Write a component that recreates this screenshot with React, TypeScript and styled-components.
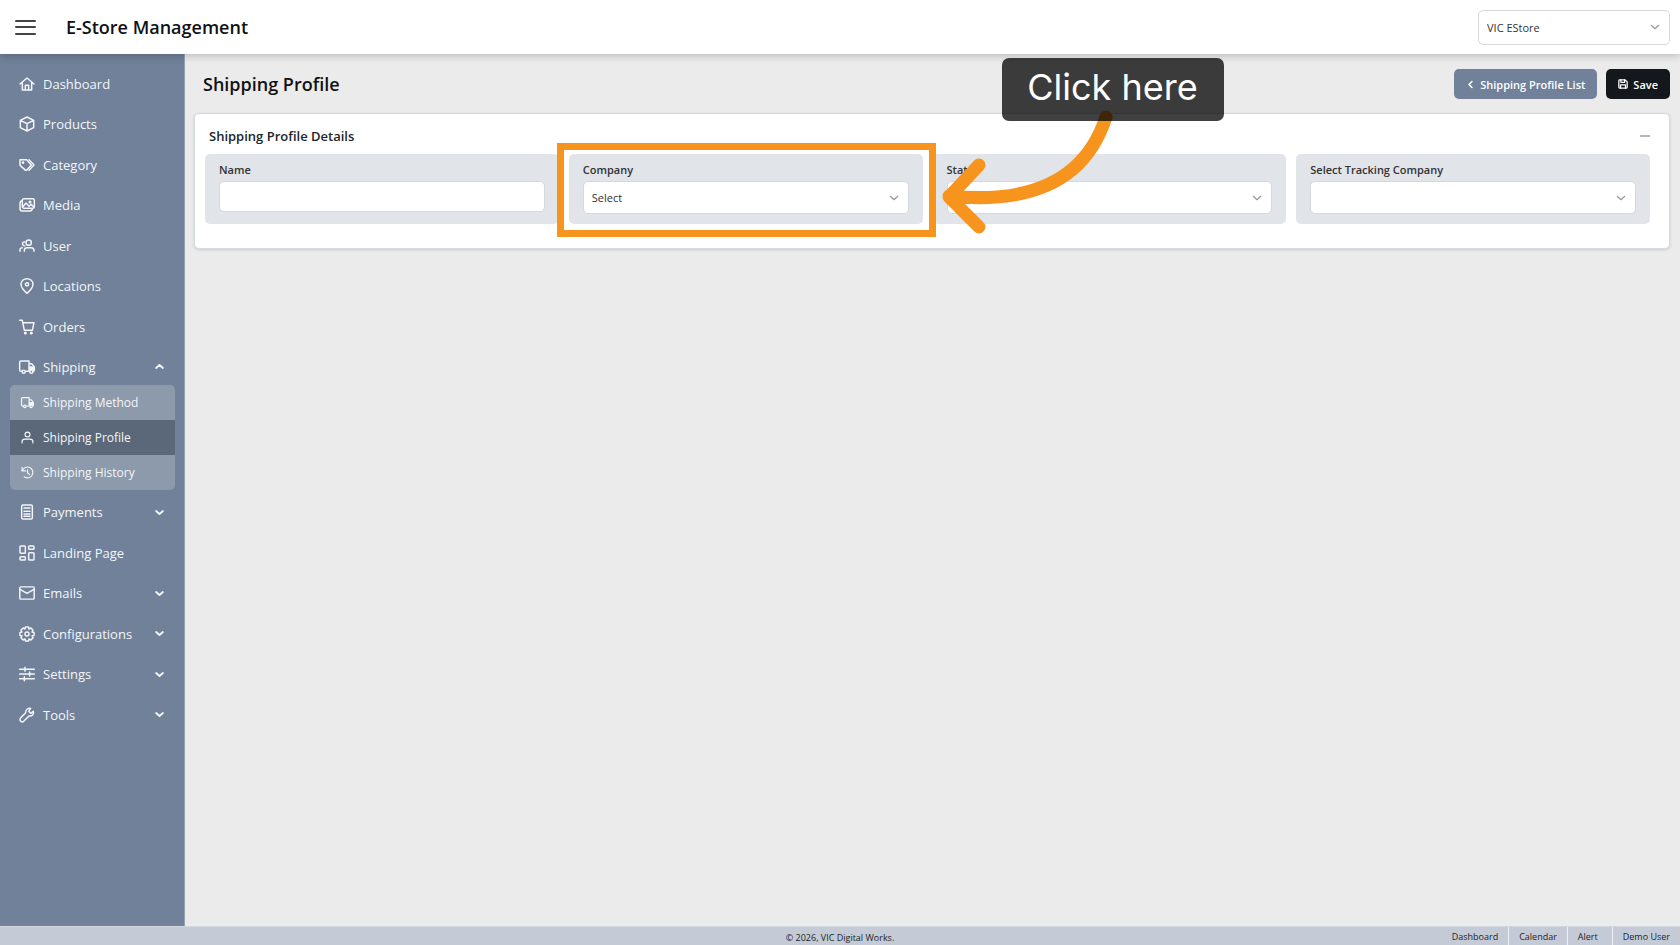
import React from "react";
import styled, { createGlobalStyle } from "styled-components";

const GlobalStyle = createGlobalStyle`
  *, *::before, *::after { box-sizing: border-box; }
  body {
    margin: 0;
    background: #ebebeb;
    color: #212529;
    font-family: "Open Sans", "Noto Sans", sans-serif;
    font-size: 13px;
  }
  button, input, select { font: inherit; color: inherit; }
  ul { list-style: none; margin: 0; padding: 0; }
  h1, h2, p { margin: 0; }
`;

const Page = styled.div`
  min-height: 100vh;
  display: flex;
  flex-direction: column;
`;

const Header = styled.header`
  position: relative;
  z-index: 1;
  height: 54px;
  display: flex;
  align-items: center;
  padding: 0 10px 0 15px;
  background: #fff;
  box-shadow: 0 2px 8px rgba(0, 0, 0, 0.2);
`;

const MenuButton = styled.button`
  width: 21px;
  height: 15px;
  padding: 0;
  border: 0;
  background: none;
  display: flex;
  flex-direction: column;
  justify-content: space-between;
`;

const MenuBar = styled.span`
  width: 100%;
  height: 2px;
  border-radius: 1px;
  background: #444;
`;

const Brand = styled.h1`
  flex: 1;
  margin-left: 30px;
  font-size: 18px;
  font-weight: 600;
  line-height: 26px;
  color: #111;
`;

const SelectWrap = styled.div<{ $width?: string; $height: number }>`
  position: relative;
  width: ${(p) => p.$width ?? "100%"};
  height: ${(p) => p.$height}px;
  svg {
    position: absolute;
    right: 10px;
    top: 50%;
    margin-top: -5px;
    pointer-events: none;
  }
`;

const Select = styled.select`
  display: block;
  width: 100%;
  height: 100%;
  padding: 0 28px 0 8px;
  appearance: none;
  border: 1px solid #d6d8da;
  border-radius: 5px;
  background: #fff;
  color: #333;
  font-size: 11px;
`;

const Body = styled.div`
  flex: 1;
  display: flex;
`;

const Sidebar = styled.nav`
  width: 185px;
  flex: none;
  padding: 12px 9px 0 10px;
  background: #708199;
  border-right: 1px solid #94a1b3;
`;

const MenuGroup = styled.ul<{ $height: number }>`
  min-height: ${(p) => p.$height}px;
  display: flex;
  flex-direction: column;
  justify-content: space-between;
`;

const MenuLink = styled.a`
  height: 36px;
  display: flex;
  align-items: center;
  padding: 0 11px 0 9px;
  color: #f4f6f8;
  font-size: 13px;
  text-decoration: none;
  svg { flex: none; }
`;

const MenuText = styled.span`
  flex: 1;
  margin-left: 8px;
`;

const SubMenu = styled.ul`
  margin-bottom: 4px;
  overflow: hidden;
  border-radius: 5px;
  background: #8c9aac;
`;

const SubLink = styled(MenuLink)<{ $active?: boolean }>`
  height: 35px;
  padding-left: 11px;
  background: ${(p) => (p.$active ? "#5a687a" : "transparent")};
  font-size: 12px;
`;

const SubText = styled(MenuText)`
  margin-left: 9px;
`;

const Main = styled.main`
  flex: 1;
  min-width: 0;
  padding: 15px 10px 0 9px;
`;

const TitleRow = styled.div`
  display: flex;
  align-items: center;
  gap: 9px;
  margin-bottom: 14px;
`;

const PageTitle = styled.h1`
  flex: 1;
  padding-left: 9px;
  font-size: 18px;
  font-weight: 600;
  line-height: 30px;
  color: #111;
`;

const ActionButton = styled.button<{ $tone: string }>`
  height: 30px;
  display: flex;
  align-items: center;
  gap: 5px;
  padding: 0 12px;
  border: 0;
  border-radius: 5px;
  background: ${(p) => p.$tone};
  color: #fff;
  font-size: 11px;
  font-weight: 600;
`;

const Card = styled.section`
  padding: 13px 19px 24px 10px;
  border: 1px solid #d5dae1;
  border-radius: 5px;
  background: #fff;
  box-shadow: 0 1px 3px rgba(0, 0, 0, 0.15);
`;

const CardHead = styled.div`
  display: flex;
  align-items: center;
  justify-content: space-between;
  margin-bottom: 9px;
  padding-left: 4px;
`;

const CardTitle = styled.h2`
  font-size: 13px;
  font-weight: 600;
  line-height: 18px;
`;

const CollapseButton = styled.button`
  width: 10px;
  height: 18px;
  padding: 0;
  border: 0;
  background: none;
  display: flex;
  align-items: center;
`;

const CollapseMark = styled.span`
  width: 10px;
  height: 2px;
  background: #b5b5b5;
`;

const Fields = styled.div`
  display: grid;
  grid-template-columns: repeat(4, minmax(0, 1fr));
  gap: 10px;
`;

const Field = styled.div`
  position: relative;
  height: 70px;
  padding: 8px 14px;
  border-radius: 5px;
  background: #e1e4e9;
`;

const Label = styled.label`
  display: block;
  margin-bottom: 3px;
  font-size: 11px;
  font-weight: 600;
  line-height: 16px;
  color: #333;
`;

const TextInput = styled.input`
  display: block;
  width: 100%;
  height: 31px;
  padding: 0 8px;
  border: 1px solid #d6d8da;
  border-radius: 5px;
  background: #fff;
  font-size: 11px;
`;

const Highlight = styled.div`
  position: absolute;
  z-index: 1;
  inset: -11px -13px -13px -12px;
  border: 7px solid #f7941e;
  pointer-events: none;
`;

const Callout = styled.div`
  position: absolute;
  z-index: 2;
  left: 6px;
  top: -96px;
  width: 290px;
  height: 180px;
  pointer-events: none;
  svg { position: absolute; left: 0; top: 0; }
`;

const CalloutText = styled.div`
  position: absolute;
  left: 63px;
  top: 0;
  width: 222px;
  height: 63px;
  border-radius: 7px;
  background: rgba(0, 0, 0, 0.75);
  color: #fff;
  font-family: Inter, sans-serif;
  font-size: 36px;
  line-height: 58px;
  text-align: center;
  white-space: nowrap;
`;

const Footer = styled.footer`
  height: 19px;
  display: grid;
  grid-template-columns: 1fr auto 1fr;
  background: #c5cbd6;
  border-top: 1px solid #d3d7df;
  font-size: 9px;
  line-height: 20px;
`;

const Copyright = styled.p`
  grid-column: 2;
  line-height: 22px;
`;

const FooterLinks = styled.nav`
  display: flex;
  justify-content: flex-end;
`;

const FooterLink = styled.a<{ $roomy?: boolean }>`
  padding: 0 ${(p) => (p.$roomy ? 14 : 10)}px 0 10px;
  color: inherit;
  text-decoration: none;
  & + & { border-left: 1px solid #eef0f3; }
`;

const iconPaths: Record<string, React.ReactNode> = {
  home: <path d="M1.500 12 12 3l10.500 9M5 9.500V21h14V9.500M9.500 21v-7h5v7" />,
  box: <path d="M12 1.500 22 6.500v11l-10 5-10-5v-11zM2 6.500l10 5 10-5M12 11.500v11" />,
  tags: (
    <>
      <path d="M1.500 4h10l7 8-7 8h-1.500L1.500 12.500z" />
      <path d="M15 4l7.500 8-7.500 8" />
      <circle cx="6" cy="8.500" r="1" />
    </>
  ),
  images: (
    <>
      <rect x="5" y="2.500" width="18" height="14.500" rx="2.500" />
      <path d="M5 5.500a4 4 0 0 0-3.500 4v8c0 2 1.500 3.500 3.500 3.500h11a4 4 0 0 0 4-3.500M5.500 15l5-6 4.500 5 3-3 4.500 4" />
      <circle cx="16.500" cy="7.500" r="1.200" />
    </>
  ),
  users: (
    <>
      <circle cx="14.500" cy="7" r="4" />
      <path d="M8 20v-1.500c0-2.500 1.500-4 4-4h6c2.500 0 4.500 1.500 4.500 4V20M8.500 6a2.800 2.800 0 1 0 0 5.500M1.500 20v-2c0-2.200 1.200-3.500 3.500-3.500" />
    </>
  ),
  marker: (
    <>
      <path d="M12 23S3 15.500 3 9.500a9 8.500 0 0 1 18 0C21 15.500 12 23 12 23z" />
      <circle cx="12" cy="9.500" r="2.500" />
    </>
  ),
  cart: (
    <>
      <path d="M1 2h4l3 15h12l2.500-11.500H6" />
      <circle cx="9.500" cy="21" r="1.200" />
      <circle cx="18.500" cy="21" r="1.200" />
    </>
  ),
  truck: (
    <>
      <path d="M4 18.500H3a2 2 0 0 1-2-2V5a2 2 0 0 1 2-2h12v15.500H10M15 7h4l4 5v4.500a2 2 0 0 1-2 2" />
      <path d="M16 12h6v4h-6z" fill="currentColor" />
      <circle cx="7" cy="19" r="2.300" />
      <circle cx="18.500" cy="19" r="2.300" />
    </>
  ),
  user: (
    <>
      <circle cx="12" cy="6.500" r="4.500" />
      <path d="M2 22v-2c0-3 2.500-5 5.500-5h9c3 0 5.500 2 5.500 5v2" />
    </>
  ),
  history: <path d="M2 2.500V9h6.500M2.500 8.500a10 10 0 1 1 3.500 11.500M12 7v5.500l3.500 3" />,
  calculator: (
    <>
      <rect x="4" y="1.500" width="16" height="21" rx="2" />
      <path d="M7.500 6h9M7.500 11h2M11 11h2M14.500 11h2M7.500 15h2M11 15h2M14.500 15h2M7.500 18.500h2M11 18.500h2M14.500 18.500h2" />
    </>
  ),
  objects: (
    <>
      <rect x="1.500" y="1.500" width="8" height="11" rx="1.200" />
      <rect x="14.500" y="1.500" width="8" height="5" rx="1.200" />
      <rect x="1.500" y="17.500" width="8" height="5" rx="1.200" />
      <rect x="14.500" y="11.500" width="8" height="11" rx="1.200" />
    </>
  ),
  envelope: (
    <>
      <rect x="1.200" y="2.800" width="21.600" height="18.400" rx="1.500" />
      <path d="M1.500 6.500 12 12.500l10.500-6" />
    </>
  ),
  cog: (
    <>
      <path d="M9.800 1.500h4.400l.8 3 2.800-1.500 3.200 3.200-1.500 2.800 3 .8v4.400l-3 .8 1.500 2.800-3.200 3.200-2.800-1.500-.8 3H9.800l-.8-3L6.200 21 3 17.800 4.500 15l-3-.8V9.800l3-.8L3 6.200 6.200 3 9 4.500z" />
      <circle cx="12" cy="12" r="3" />
    </>
  ),
  sliders: <path d="M1 5h22M1 12h22M1 19h22M9 2v6M16 9v6M8 16v6" />,
  wrench: (
    <path d="M21.500 6.500 17.500 9.500 14.500 6.500 17.500 2c-3-1-8 1.500-7.500 6.500L2 17c-2 3 1.500 7 5 4.500l8-8c5 .5 8-3.500 6.500-7z" />
  ),
  save: (
    <>
      <path d="M2 4a2 2 0 0 1 2-2h13l5 5v13a2 2 0 0 1-2 2H4a2 2 0 0 1-2-2z" />
      <path d="M7 2v6h9V2M6 22v-8h12v8" />
    </>
  ),
  down: <path d="M3 8l9 8 9-8" />,
  up: <path d="M3 16l9-8 9 8" />,
  left: <path d="M16 4l-8 8 8 8" />,
};

function Icon({ name, size = 16, stroke = 2.2, color = "currentColor" }: { name: string; size?: number; stroke?: number; color?: string }) {
  return (
    <svg width={size} height={size} viewBox="0 0 24 24" fill="none" stroke={color} strokeWidth={stroke} strokeLinecap="round" strokeLinejoin="round" overflow="visible" aria-hidden="true">
      {iconPaths[name]}
    </svg>
  );
}

interface Item {
  icon: string;
  label: string;
  arrow?: "up" | "down";
}

const upperItems: Item[] = [
  { icon: "home", label: "Dashboard" },
  { icon: "box", label: "Products" },
  { icon: "tags", label: "Category" },
  { icon: "images", label: "Media" },
  { icon: "users", label: "User" },
  { icon: "marker", label: "Locations" },
  { icon: "cart", label: "Orders" },
  { icon: "truck", label: "Shipping", arrow: "up" },
];

const shippingItems = [
  { icon: "truck", label: "Shipping Method" },
  { icon: "user", label: "Shipping Profile", active: true },
  { icon: "history", label: "Shipping History" },
];

const lowerItems: Item[] = [
  { icon: "calculator", label: "Payments", arrow: "down" },
  { icon: "objects", label: "Landing Page" },
  { icon: "envelope", label: "Emails", arrow: "down" },
  { icon: "cog", label: "Configurations", arrow: "down" },
  { icon: "sliders", label: "Settings", arrow: "down" },
  { icon: "wrench", label: "Tools", arrow: "down" },
];

function Menu({ items, height }: { items: Item[]; height: number }) {
  return (
    <MenuGroup $height={height}>
      {items.map((item) => (
        <li key={item.label}>
          <MenuLink href="#">
            <Icon name={item.icon} />
            <MenuText>{item.label}</MenuText>
            {item.arrow && <Icon name={item.arrow} size={9} stroke={5} />}
          </MenuLink>
        </li>
      ))}
    </MenuGroup>
  );
}

function SelectField({ id, label, option = "", children }: { id: string; label: string; option?: string; children?: React.ReactNode }) {
  return (
    <Field>
      <Label htmlFor={id}>{label}</Label>
      <SelectWrap $height={33}>
        <Select id={id}>
          <option>{option}</option>
        </Select>
        <Icon name="down" size={10} stroke={3} color="#999" />
      </SelectWrap>
      {children}
    </Field>
  );
}

export default function App() {
  return (
    <Page>
      <GlobalStyle />
      <Header>
        <MenuButton aria-label="Toggle menu">
          <MenuBar />
          <MenuBar />
          <MenuBar />
        </MenuButton>
        <Brand>E-Store Management</Brand>
        <SelectWrap $width="192px" $height={35}>
          <Select aria-label="Store">
            <option>VIC EStore</option>
          </Select>
          <Icon name="down" size={10} stroke={3} color="#999" />
        </SelectWrap>
      </Header>
      <Body>
        <Sidebar>
          <Menu items={upperItems} height={319} />
          <SubMenu>
            {shippingItems.map((item) => (
              <li key={item.label}>
                <SubLink href="#" $active={item.active}>
                  <Icon name={item.icon} size={13} />
                  <SubText>{item.label}</SubText>
                </SubLink>
              </li>
            ))}
          </SubMenu>
          <Menu items={lowerItems} height={239} />
        </Sidebar>
        <Main>
          <TitleRow>
            <PageTitle>Shipping Profile</PageTitle>
            <ActionButton $tone="#708199">
              <Icon name="left" size={9} stroke={4} />
              Shipping Profile List
            </ActionButton>
            <ActionButton $tone="#14171c">
              <Icon name="save" size={10} stroke={3} />
              Save
            </ActionButton>
          </TitleRow>
          <Card>
            <CardHead>
              <CardTitle>Shipping Profile Details</CardTitle>
              <CollapseButton aria-label="Collapse">
                <CollapseMark />
              </CollapseButton>
            </CardHead>
            <Fields>
              <Field>
                <Label htmlFor="name">Name</Label>
                <TextInput id="name" type="text" />
              </Field>
              <SelectField id="company" label="Company" option="Select">
                <Highlight />
              </SelectField>
              <SelectField id="state" label="State">
                <Callout>
                  <svg width="290" height="180" viewBox="0 0 290 180" fill="none" stroke="#f7941e" strokeWidth="13" strokeLinecap="round" strokeLinejoin="round" aria-hidden="true">
                    <path d="M167 59C148 118 98 147 10 138M40 107 10 139l30 30" />
                  </svg>
                  <CalloutText>Click here</CalloutText>
                </Callout>
              </SelectField>
              <SelectField id="tracking" label="Select Tracking Company" />
            </Fields>
          </Card>
        </Main>
      </Body>
      <Footer>
        <Copyright>© 2026, VIC Digital Works.</Copyright>
        <FooterLinks>
          <FooterLink href="#">Dashboard</FooterLink>
          <FooterLink href="#">Calendar</FooterLink>
          <FooterLink href="#" $roomy>Alert</FooterLink>
          <FooterLink href="#">Demo User</FooterLink>
        </FooterLinks>
      </Footer>
    </Page>
  );
}
